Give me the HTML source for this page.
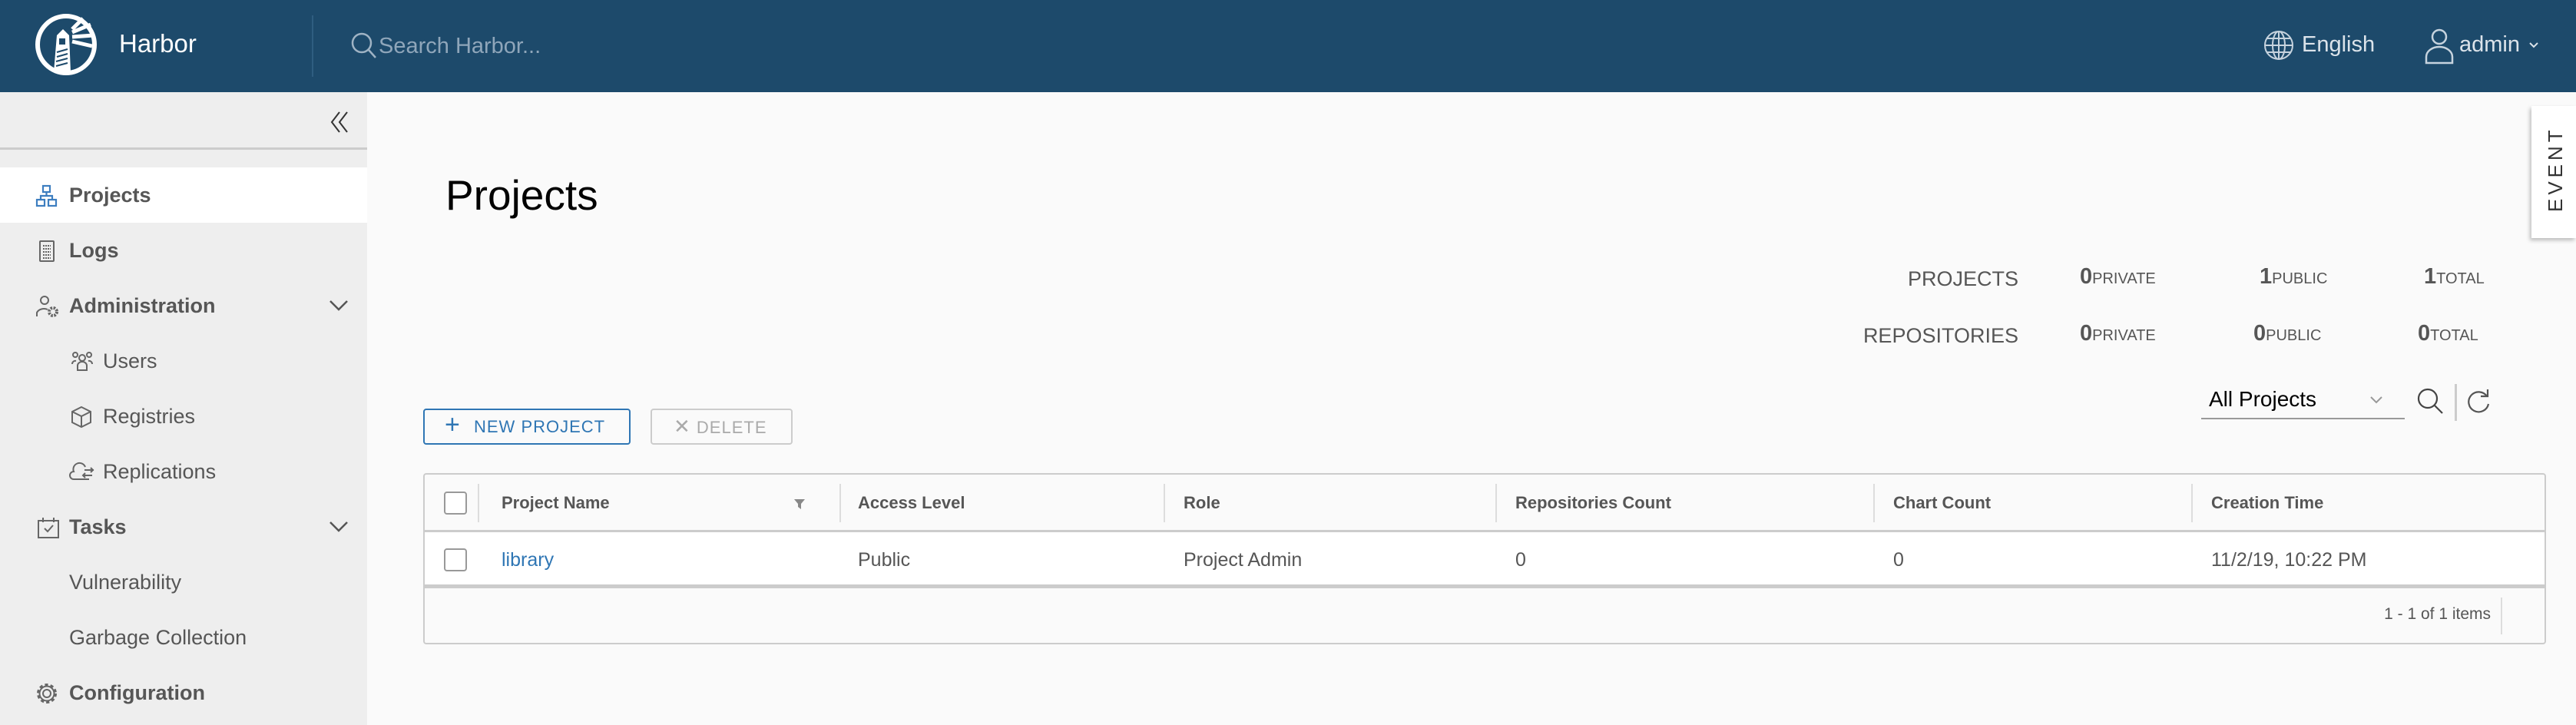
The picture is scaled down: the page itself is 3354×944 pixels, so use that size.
<!DOCTYPE html>
<html><head><meta charset="utf-8"><style>
*{margin:0;padding:0;box-sizing:border-box}
body{width:3354px;height:944px;overflow:hidden;background:#fafafa;font-family:"Liberation Sans",sans-serif;position:relative;color:#565656}
.a{position:absolute;white-space:nowrap}
#hdr{position:absolute;left:0;top:0;width:3354px;height:120px;background:#1d4a6b}
#side{position:absolute;left:0;top:120px;width:478px;height:824px;background:#eeeeee}
.nav{position:absolute;left:0;width:478px;height:72px;font-size:27px;line-height:72px}
.nav b{position:absolute;left:90px;font-weight:bold;color:#565656}
.nav span{position:absolute;left:90px;color:#565656}
.nav svg{position:absolute;top:22px}
.th{position:absolute;top:0;height:74px;line-height:74px;font-size:22px;font-weight:bold;color:#565656}
.sep{position:absolute;top:12px;width:2px;height:50px;background:#ddd}
.td{position:absolute;top:74px;height:74px;line-height:74px;font-size:25px;color:#565656}
.cb{position:absolute;width:30px;height:30px;border:2px solid #999;border-radius:4px;background:#fff}
.st{font-size:27px;color:#565656}
.num{font-size:29px;font-weight:bold;color:#565656}
.sm{font-size:20px;color:#565656}
</style></head><body>
<div id="hdr">
 <svg class="a" style="left:44px;top:16px" width="84" height="84" viewBox="0 0 84 84">
  <circle cx="42" cy="42" r="37" fill="none" stroke="#fff" stroke-width="6"/>
  <path d="M26 78 L30 30 L38 22 L46 30 L48 78Z" fill="#fff"/>
  <rect x="33" y="34" width="8" height="8" fill="#1d4a6b"/>
  <path d="M30 52l14-4M30 58l14-4M29 64l15-4M29 70l15-4" stroke="#1d4a6b" stroke-width="2"/>
  <path d="M50 26 L74 16 M50 32 L78 30 M50 38 L76 44 M50 22 L64 8" stroke="#fff" stroke-width="5"/>
 </svg>
 <div class="a" style="left:155px;top:38px;font-size:33px;color:#fff">Harbor</div>
 <div class="a" style="left:406px;top:20px;width:2px;height:80px;background:#2f5d80"></div>
 <svg class="a" style="left:455px;top:40px" width="40" height="40" viewBox="0 0 40 40"><circle cx="16" cy="16" r="12" fill="none" stroke="#9fb3c4" stroke-width="2.5"/><path d="M25 25l9 10" stroke="#9fb3c4" stroke-width="2.5"/></svg>
 <div class="a" style="left:493px;top:44px;font-size:29px;color:#8fa6ba">Search Harbor...</div>
 <svg class="a" style="left:2946px;top:38px" width="42" height="42" viewBox="0 0 42 42" fill="none" stroke="#c6d3de" stroke-width="2"><circle cx="21" cy="21" r="18"/><ellipse cx="21" cy="21" rx="8" ry="18"/><path d="M3 21h36M6 12h30M6 30h30M21 3v36"/></svg>
 <div class="a" style="left:2997px;top:42px;font-size:29px;color:#dbe3ea">English</div>
 <svg class="a" style="left:3156px;top:36px" width="40" height="48" viewBox="0 0 40 48" fill="none" stroke="#c6d3de" stroke-width="2.5"><circle cx="20" cy="12" r="9"/><path d="M3 46v-8a17 13 0 0 1 34 0v8z"/></svg>
 <div class="a" style="left:3202px;top:42px;font-size:29px;color:#dbe3ea">admin</div>
 <svg class="a" style="left:3292px;top:54px" width="14" height="10" viewBox="0 0 14 10"><path d="M2 2l5 5 5-5" fill="none" stroke="#dbe3ea" stroke-width="2"/></svg>
</div>
<div id="side">
 <svg class="a" style="left:428px;top:24px" width="28" height="30" viewBox="0 0 28 30" fill="none" stroke="#333" stroke-width="2"><path d="M14 2L4 15l10 13M24 2L14 15l10 13"/></svg>
 <div class="a" style="left:0;top:72px;width:478px;height:3px;background:#ccc"></div>
</div>
<div class="nav" style="top:218px;background:#fff"><svg style="left:46px" width="30" height="30" viewBox="0 0 30 30" fill="none" stroke="#3d7ec0" stroke-width="2.2"><rect x="10" y="2" width="9" height="8"/><rect x="2" y="20" width="10" height="8"/><rect x="17" y="20" width="10" height="8"/><path d="M14.5 10v5M7 20v-5h15v5"/></svg><b>Projects</b></div>
<div class="nav" style="top:290px"><svg style="left:50px" width="22" height="30" viewBox="0 0 22 30" fill="none" stroke="#666" stroke-width="2"><rect x="2" y="2" width="18" height="26" rx="1"/><path d="M6 8h10M6 12h10M6 16h10M6 20h10M6 24h10" stroke-dasharray="2 1"/></svg><b>Logs</b></div>
<div class="nav" style="top:362px"><svg style="left:46px" width="32" height="30" viewBox="0 0 32 30" fill="none" stroke="#666" stroke-width="2"><circle cx="12" cy="7" r="5"/><path d="M2 28v-5a10 8 0 0 1 14-4"/><circle cx="23" cy="22" r="5" stroke-width="4" stroke-dasharray="2.5 1.5"/></svg><b>Administration</b><svg style="left:428px;top:28px" width="26" height="16" viewBox="0 0 26 16"><path d="M2 2l11 11 11-11" fill="none" stroke="#555" stroke-width="2.5"/></svg></div>
<div class="nav" style="top:434px"><svg style="left:92px" width="30" height="28" viewBox="0 0 30 28" fill="none" stroke="#666" stroke-width="2"><circle cx="15" cy="10" r="4"/><circle cx="6" cy="6" r="3"/><circle cx="24" cy="6" r="3"/><path d="M9 26v-6a6 5 0 0 1 12 0v6z M2 18a4 4 0 0 1 5-4M28 18a4 4 0 0 0-5-4"/></svg><span style="left:134px">Users</span></div>
<div class="nav" style="top:506px"><svg style="left:92px" width="28" height="30" viewBox="0 0 28 30" fill="none" stroke="#666" stroke-width="2"><path d="M14 2l12 6v14l-12 6-12-6V8z M2 8l12 6 12-6M14 14v14"/></svg><span style="left:134px">Registries</span></div>
<div class="nav" style="top:578px"><svg style="left:90px" width="34" height="28" viewBox="0 0 34 28" fill="none" stroke="#666" stroke-width="2"><path d="M26 24H6a5 5 0 0 1 0-10a8 8 0 0 1 15-6M20 12h12M28 9l3 3-3 3M30 19H18M21 16l-3 3 3 3"/></svg><span style="left:134px">Replications</span></div>
<div class="nav" style="top:650px"><svg style="left:48px" width="30" height="30" viewBox="0 0 30 30" fill="none" stroke="#666" stroke-width="2"><path d="M2 6h26v22H2z M8 2v6M22 2v6M10 16l4 4 7-8"/></svg><b>Tasks</b><svg style="left:428px;top:28px" width="26" height="16" viewBox="0 0 26 16"><path d="M2 2l11 11 11-11" fill="none" stroke="#555" stroke-width="2.5"/></svg></div>
<div class="nav" style="top:722px"><span>Vulnerability</span></div>
<div class="nav" style="top:794px"><span>Garbage Collection</span></div>
<div class="nav" style="top:866px"><svg style="left:46px" width="30" height="30" viewBox="0 0 30 30" fill="none" stroke="#666" stroke-width="2"><circle cx="15" cy="15" r="5"/><circle cx="15" cy="15" r="11" stroke-width="4" stroke-dasharray="4 3"/><circle cx="15" cy="15" r="9.5"/></svg><b>Configuration</b></div>

<div class="a" style="left:580px;top:222px;font-size:55px;color:#000">Projects</div>
<div class="a" style="left:3296px;top:138px;width:58px;height:172px;background:#fff;box-shadow:-2px 3px 5px rgba(0,0,0,.25)"></div>
<div class="a" style="left:3312px;top:276px;transform:rotate(-90deg);transform-origin:0 0;font-size:26px;letter-spacing:5px;color:#333">EVENT</div>

<div class="a st" style="right:726px;top:348px">PROJECTS</div>
<div class="a st" style="right:726px;top:422px">REPOSITORIES</div>
<div class="a" style="left:2708px;top:344px"><span class="num">0</span><span class="sm">PRIVATE</span></div>
<div class="a" style="left:2942px;top:344px"><span class="num">1</span><span class="sm">PUBLIC</span></div>
<div class="a" style="left:3156px;top:344px"><span class="num">1</span><span class="sm">TOTAL</span></div>
<div class="a" style="left:2708px;top:418px"><span class="num">0</span><span class="sm">PRIVATE</span></div>
<div class="a" style="left:2934px;top:418px"><span class="num">0</span><span class="sm">PUBLIC</span></div>
<div class="a" style="left:3148px;top:418px"><span class="num">0</span><span class="sm">TOTAL</span></div>

<div class="a" style="left:551px;top:532px;width:270px;height:47px;border:2px solid #2f76b4;border-radius:4px;color:#2f76b4;font-size:22px;line-height:43px;padding-left:64px;letter-spacing:1px"><span style="position:absolute;left:26px;font-size:34px;top:-2px">+</span>NEW PROJECT</div>
<div class="a" style="left:847px;top:532px;width:185px;height:47px;border:2px solid #ccc;border-radius:4px;color:#aaa;font-size:22px;line-height:43px;padding-left:28px;letter-spacing:1px"><span style="font-size:26px">✕</span>&nbsp;DELETE</div>

<div class="a" style="left:2876px;top:504px;font-size:28px;color:#000">All Projects</div>
<div class="a" style="left:2866px;top:544px;width:265px;height:2px;background:#999"></div>
<svg class="a" style="left:3084px;top:514px" width="20" height="14" viewBox="0 0 20 14"><path d="M3 3l7 7 7-7" fill="none" stroke="#999" stroke-width="2"/></svg>
<svg class="a" style="left:3146px;top:504px" width="40" height="40" viewBox="0 0 40 40" fill="none" stroke="#444" stroke-width="2.2"><circle cx="15" cy="15" r="12"/><path d="M24 24l10 10"/></svg>
<div class="a" style="left:3196px;top:500px;width:3px;height:48px;background:#ccc"></div>
<svg class="a" style="left:3210px;top:504px" width="36" height="36" viewBox="0 0 36 36" fill="none" stroke="#555" stroke-width="2.2"><path d="M28 12A13 13 0 1 0 30 22M29 3v9h-9"/></svg>

<div class="a" style="left:551px;top:616px;width:2764px;height:223px;border:2px solid #ccc;border-radius:4px;background:#fafafa;overflow:hidden">
 <div class="cb" style="left:25px;top:22px"></div>
 <div class="sep" style="left:69px"></div>
 <div class="th" style="left:100px">Project Name</div>
 <svg class="a" style="left:480px;top:30px" width="16" height="16" viewBox="0 0 16 16"><path d="M1 2h14l-5 6v7l-4-3V8z" fill="#888"/></svg>
 <div class="sep" style="left:540px"></div>
 <div class="th" style="left:564px">Access Level</div>
 <div class="sep" style="left:962px"></div>
 <div class="th" style="left:988px">Role</div>
 <div class="sep" style="left:1394px"></div>
 <div class="th" style="left:1420px">Repositories Count</div>
 <div class="sep" style="left:1886px"></div>
 <div class="th" style="left:1912px">Chart Count</div>
 <div class="sep" style="left:2300px"></div>
 <div class="th" style="left:2326px">Creation Time</div>
 <div class="a" style="left:0;top:72px;width:2764px;height:76px;background:#fff;border-top:3px solid #ccc;border-bottom:5px solid #ccc"></div>
 <div class="cb" style="left:25px;top:96px"></div>
 <div class="td" style="left:100px;color:#2f76b4">library</div>
 <div class="td" style="left:564px">Public</div>
 <div class="td" style="left:988px">Project Admin</div>
 <div class="td" style="left:1420px">0</div>
 <div class="td" style="left:1912px">0</div>
 <div class="td" style="left:2326px">11/2/19, 10:22 PM</div>
 <div class="a" style="right:70px;top:170px;font-size:21px;color:#565656">1 - 1 of 1 items</div>
 <div class="a" style="left:2703px;top:160px;width:2px;height:48px;background:#ddd"></div>
</div>
</body></html>
